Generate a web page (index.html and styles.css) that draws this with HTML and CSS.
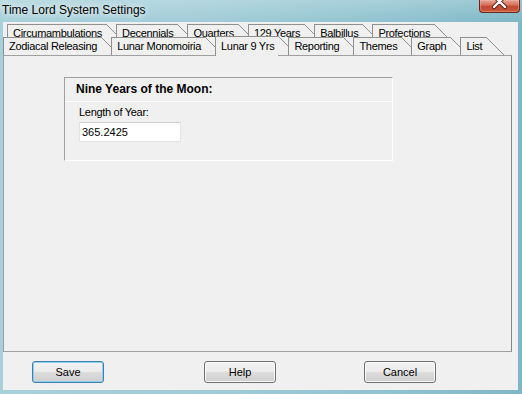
FILE: index.html
```html
<!DOCTYPE html>
<html lang="en">
<head>
    <meta charset="UTF-8">
    <title>Time Lord System Settings</title>
    <link rel="stylesheet" href="styles.css">
</head>
<body>
    <div class="window">
        <div class="titlebar">
            <span class="title">Time Lord System Settings</span>
            <span class="close">
                <svg width="41" height="13" viewBox="0 0 41 13">
                    <path d="M15 -3 L26 8 M26 -3 L15 8" stroke="#5b1d12" stroke-width="4.2" stroke-linecap="round"/>
                    <path d="M15 -3 L26 8 M26 -3 L15 8" stroke="#ffffff" stroke-width="2.4" stroke-linecap="round"/>
                </svg>
            </span>
        </div>

        <div class="client">
            <div class="tabs">
                <div class="tab-row back">
                    <div class="tab">Circumambulations</div>
                    <div class="tab">Decennials</div>
                    <div class="tab">Quarters</div>
                    <div class="tab">129 Years</div>
                    <div class="tab">Balbillus</div>
                    <div class="tab">Profections</div>
                </div>
                <div class="tab-row front">
                    <div class="tab">Zodiacal Releasing</div>
                    <div class="tab">Lunar Monomoiria</div>
                    <div class="tab active">Lunar 9 Yrs</div>
                    <div class="tab">Reporting</div>
                    <div class="tab">Themes</div>
                    <div class="tab">Graph</div>
                    <div class="tab">List</div>
                </div>
            </div>

            <div class="page">
                <div class="group">
                    <div class="group-head">Nine Years of the Moon:</div>
                    <div class="group-body">
                        <label class="field-label" for="yearLength">Length of Year:</label>
                        <input type="text" id="yearLength" class="field" value="365.2425">
                    </div>
                </div>
            </div>

            <div class="buttons">
                <button class="btn btn-save">Save</button>
                <button class="btn btn-help">Help</button>
                <button class="btn btn-cancel">Cancel</button>
            </div>
        </div>
    </div>
</body>
</html>
```

FILE: styles.css
```css
:root {
    --face: #f0f0f0;
    --line: #8f8f8f;
    --edge: #a0a0a0;
}

* {
    box-sizing: border-box;
}

body {
    margin: 0;
    font-family: "Liberation Sans", Arial, sans-serif;
    font-size: 11px;
    color: #000;
    background: #fff;
}

.window {
    width: 522px;
    height: 394px;
    display: flex;
    flex-direction: column;
    background:
        linear-gradient(to bottom, rgba(255,255,255,0.22), rgba(255,255,255,0) 22px),
        linear-gradient(to right, #a7d1da 0%, #a0ccd7 40%, #8fc2cf 75%, #7fb7c6 100%);
}

.titlebar {
    height: 22px;
    display: flex;
    align-items: flex-start;
    padding-left: 2px;
}

.title {
    font-size: 12px;
    line-height: 14px;
    margin-top: 3px;
    text-shadow: 0 0 6px #fff, 0 0 10px rgba(255,255,255,0.8);
}

.close {
    margin-left: auto;
    margin-right: 2px;
    width: 41px;
    height: 13px;
    border: 1px solid #6a261a;
    border-top: none;
    border-radius: 0 0 4px 4px;
    overflow: hidden;
    background: linear-gradient(to bottom, #e4a695 0%, #d7725c 40%, #c14a30 55%, #c85a3c 100%);
    box-shadow: inset 0 0 0 1px rgba(255,200,180,0.35);
}

.close svg {
    display: block;
    margin: -1px 0 0 -1px;
}

.client {
    flex: 1;
    margin: 0 4px 4px 3px;
    background: var(--face);
    display: flex;
    flex-direction: column;
}

/* tab strip */
.tabs {
    padding-top: 2px;
}

.tab-row {
    display: flex;
}

.tab-row.back {
    height: 13px;
    overflow: hidden;
    padding-left: 4px;
}

.tab-row.front {
    height: 18px;
    align-items: flex-start;
}

.tab {
    position: relative;
    height: 18px;
    background: var(--face);
    border-left: 1px solid var(--line);
    border-top: 1px solid var(--line);
    padding: 1px 4px 0 5px;
    line-height: 14px;
    letter-spacing: -0.3px;
    white-space: nowrap;
}

.tab + .tab {
    margin-left: 10px;
}

.tab::after {
    content: "";
    position: absolute;
    top: -1px;
    left: 100%;
    width: 18px;
    height: 18px;
    background: linear-gradient(to top right,
        transparent calc(50% - 0.6px),
        var(--line) calc(50% - 0.6px),
        var(--line) calc(50% + 0.6px),
        transparent calc(50% + 0.6px));
}

.tab.active {
    height: 20px;
    margin-top: -1px;
    padding-top: 2px;
}

.tab.active::after {
    width: 20px;
    height: 20px;
}

/* page */
.page {
    width: 509px;
    height: 297px;
    border: 1px solid var(--edge);
    border-right-color: #868686;
    padding: 21px 0 0 60px;
}

.group {
    width: 329px;
    border-top: 1px solid var(--edge);
    border-left: 1px solid var(--edge);
    border-right: 1px solid #fff;
    border-bottom: 1px solid #fff;
}

.group-head {
    font-weight: bold;
    font-size: 12px;
    line-height: 14px;
    padding: 4px 0 5px 11px;
    border-bottom: 1px solid #fff;
}

.group-body {
    padding: 4px 0 18px 14px;
}

.field-label {
    display: block;
    line-height: 13px;
    letter-spacing: -0.3px;
}

.field {
    display: block;
    margin-top: 3px;
    width: 102px;
    height: 20px;
    padding: 0 2px;
    border: 1px solid #e3e3e3;
    border-top-color: #d2d2d2;
    background: #fff;
    font-family: "Liberation Sans", Arial, sans-serif;
    font-size: 11px;
    color: #000;
    outline: none;
}

/* buttons */
.buttons {
    display: flex;
    padding-top: 9px;
}

.btn {
    width: 72px;
    height: 22px;
    padding: 0;
    border: 1px solid #707070;
    border-radius: 3px;
    background: linear-gradient(to bottom, #f2f2f2 0%, #ebebeb 50%, #dddddd 50%, #cfcfcf 100%);
    box-shadow: inset 0 0 0 1px #fbfbfb;
    font-family: "Liberation Sans", Arial, sans-serif;
    font-size: 11px;
    color: #000;
}

.btn-save {
    margin-left: 29px;
    border-color: #3c7fb1;
    box-shadow: inset 0 0 0 1px #8fd0ef;
}

.btn-help {
    margin-left: 100px;
}

.btn-cancel {
    margin-left: 88px;
}
```
